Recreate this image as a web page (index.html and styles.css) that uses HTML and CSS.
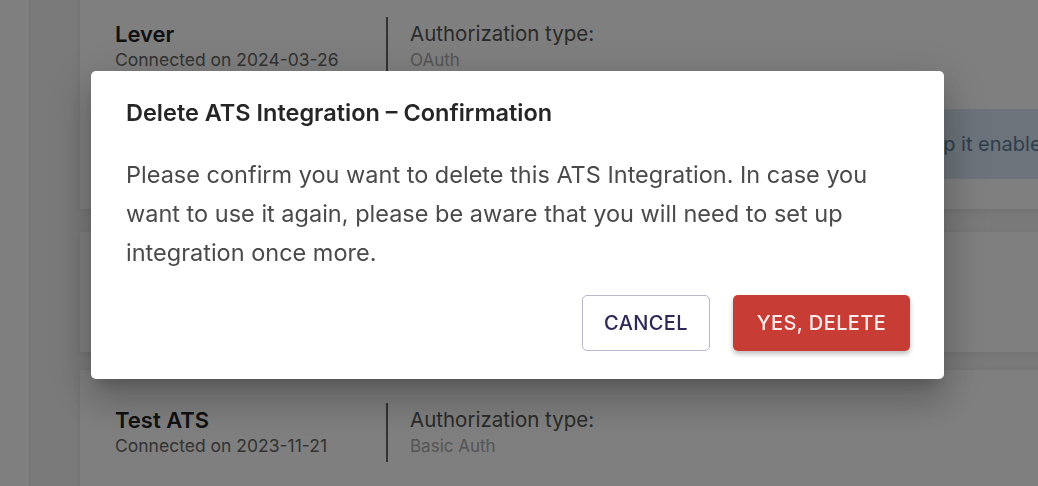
FILE: index.html
```html
<!DOCTYPE html>
<html lang="en">
<head>
    <meta charset="UTF-8">
    <meta name="viewport" content="width=device-width, initial-scale=1.0">
    <title>ATS Integrations</title>
    <link rel="stylesheet" href="styles.css">
</head>
<body>

    <div class="layout">
        <!-- Sidebar -->
        <aside class="sidebar"></aside>

        <!-- Integrations list -->
        <main class="main">
            <div class="card first-card">
                <div class="card-row">
                    <div class="card-name">
                        <div class="ats-name">Lever</div>
                        <div class="ats-date">Connected on 2024-03-26</div>
                    </div>
                    <div class="card-auth">
                        <div class="auth-label">Authorization type:</div>
                        <div class="auth-value">OAuth</div>
                    </div>
                </div>
                <div class="info-box">
                    This integration syncs your open jobs and candidates automatically, so keep it enabled at all times.
                </div>
            </div>

            <div class="card empty-card"></div>

            <div class="card">
                <div class="card-row">
                    <div class="card-name">
                        <div class="ats-name">Test ATS</div>
                        <div class="ats-date">Connected on 2023-11-21</div>
                    </div>
                    <div class="card-auth">
                        <div class="auth-label">Authorization type:</div>
                        <div class="auth-value">Basic Auth</div>
                    </div>
                </div>
            </div>
        </main>
    </div>

    <!-- Delete Confirmation Dialog -->
    <div class="overlay">
        <div class="dialog">
            <h2 class="dialog-title">Delete ATS Integration – Confirmation</h2>
            <p class="dialog-text">Please confirm you want to delete this ATS Integration. In case you want to use it again, please be aware that you will need to set up integration once more.</p>
            <div class="dialog-actions">
                <button class="btn btn-outline">Cancel</button>
                <button class="btn btn-danger">Yes, Delete</button>
            </div>
        </div>
    </div>

</body>
</html>
```

FILE: styles.css
```css
/* Global Styles */
body {
    font-family: Inter, Roboto, "Liberation Sans", sans-serif;
    margin: 0;
    padding: 0;
    background: #f4f4f4;
    overflow: hidden;
    height: 486px;
}

.layout {
    display: flex;
    height: 100%;
}

.sidebar {
    width: 29px;
    flex: none;
    background: #fff;
    border-right: 1px solid #e2e2e2;
}

.main {
    flex: none;
    width: 1200px;
    padding-left: 50px;
}

/* Cards */
.card {
    background: #fff;
    padding: 33px 35px 30px;
    margin-bottom: 23px;
    box-shadow: 0 2px 8px rgba(0, 0, 0, 0.08);
}

.first-card {
    margin-top: -16px;
}

.empty-card {
    height: 120px;
    padding: 0;
    margin-bottom: 18px;
}

.card-row {
    display: flex;
    align-items: stretch;
}

.card-name {
    width: 248px;
    padding: 4px 23px 0 0;
    border-right: 2px solid #666;
    height: 55px;
}

.ats-name {
    font-size: 22px;
    font-weight: 600;
    color: #222;
    line-height: 26px;
}

.ats-date {
    font-size: 17.5px;
    color: #666;
    line-height: 22px;
    margin-top: 2px;
}

.card-auth {
    padding: 5px 0 0 22px;
}

.auth-label {
    font-size: 20.5px;
    color: #555;
    line-height: 24px;
}

.auth-value {
    font-size: 17px;
    color: #aaa;
    line-height: 20px;
    margin-top: 4px;
}

.info-box {
    margin-top: 33px;
    height: 70px;
    background: #d8e6f4;
    color: #5e7c98;
    font-size: 20px;
    line-height: 70px;
    padding: 0 20px 0 120px;
    white-space: nowrap;
}

/* Dialog */
.overlay {
    position: fixed;
    inset: 0;
    background: rgba(0, 0, 0, 0.5);
    display: flex;
    justify-content: center;
    align-items: flex-start;
    padding: 71px 3px 0 0;
}

.dialog {
    width: 784px;
    background: #fff;
    border-radius: 5px;
    padding: 26px 34px 28px 35px;
    box-shadow: 0 11px 15px -7px rgba(0, 0, 0, 0.2), 0 24px 38px 3px rgba(0, 0, 0, 0.14), 0 9px 46px 8px rgba(0, 0, 0, 0.12);
}

.dialog-title {
    font-size: 23.5px;
    font-weight: 600;
    color: #262626;
    line-height: 32px;
    margin: 0;
}

.dialog-text {
    font-size: 23.5px;
    color: #4a4a4a;
    line-height: 39px;
    margin: 26px 0 23px;
}

.dialog-actions {
    display: flex;
    justify-content: flex-end;
    gap: 23px;
}

.btn {
    height: 56px;
    font-family: inherit;
    font-size: 20px;
    font-weight: 500;
    letter-spacing: 0.4px;
    text-transform: uppercase;
    border-radius: 5px;
    cursor: pointer;
}

.btn-outline {
    width: 128px;
    background: #fff;
    color: #2d2856;
    border: 1px solid #bab6cf;
}

.btn-danger {
    width: 177px;
    background: #c73d36;
    color: #fdeceb;
    border: none;
    box-shadow: 0 3px 5px rgba(0, 0, 0, 0.25);
}
```
